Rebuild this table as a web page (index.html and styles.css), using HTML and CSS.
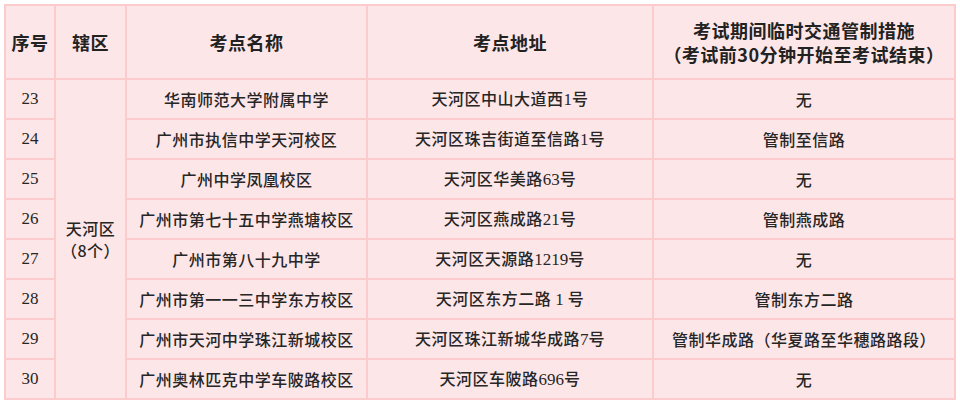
FILE: index.html
```html
<!DOCTYPE html>
<html lang="zh-CN">
<head>
<meta charset="utf-8">
<title>考点交通管制措施</title>
<link rel="stylesheet" href="styles.css">
</head>
<body>
<div class="wrap">
<table class="grid">
  <colgroup>
    <col class="c1"><col class="c2"><col class="c3"><col class="c4"><col class="c5">
  </colgroup>
  <thead>
    <tr class="head">
      <th>序号</th>
      <th>辖区</th>
      <th>考点名称</th>
      <th>考点地址</th>
      <th>考试期间临时交通管制措施<br>（考试前30分钟开始至考试结束）</th>
    </tr>
  </thead>
  <tbody>
    <tr>
      <td class="num">23</td>
      <td rowspan="8" class="dist">天河区<br>（8个）</td>
      <td>华南师范大学附属中学</td>
      <td>天河区中山大道西<span class="d">1</span>号</td>
      <td>无</td>
    </tr>
    <tr>
      <td class="num">24</td>
      <td>广州市执信中学天河校区</td>
      <td>天河区珠吉街道至信路<span class="d">1</span>号</td>
      <td>管制至信路</td>
    </tr>
    <tr>
      <td class="num">25</td>
      <td>广州中学凤凰校区</td>
      <td>天河区华美路<span class="d">63</span>号</td>
      <td>无</td>
    </tr>
    <tr>
      <td class="num">26</td>
      <td>广州市第七十五中学燕塘校区</td>
      <td>天河区燕成路<span class="d">21</span>号</td>
      <td>管制燕成路</td>
    </tr>
    <tr>
      <td class="num">27</td>
      <td>广州市第八十九中学</td>
      <td>天河区天源路<span class="d">1219</span>号</td>
      <td>无</td>
    </tr>
    <tr>
      <td class="num">28</td>
      <td>广州市第一一三中学东方校区</td>
      <td>天河区东方二路 <span class="d">1</span> 号</td>
      <td>管制东方二路</td>
    </tr>
    <tr>
      <td class="num">29</td>
      <td>广州市天河中学珠江新城校区</td>
      <td>天河区珠江新城华成路<span class="d">7</span>号</td>
      <td>管制华成路（华夏路至华穗路路段）</td>
    </tr>
    <tr>
      <td class="num">30</td>
      <td>广州奥林匹克中学车陂路校区</td>
      <td>天河区车陂路<span class="d">696</span>号</td>
      <td>无</td>
    </tr>
  </tbody>
</table>
</div>
</body>
</html>
```

FILE: styles.css
```css
html, body {
  margin: 0;
  padding: 0;
  background: #ffffff;
}

.wrap {
  padding: 4px 0 0 4px;
}

.grid {
  border-collapse: collapse;
  table-layout: fixed;
  width: 950px;
  background: #fde6e8;
  font-family: "Noto Sans CJK SC", "Noto Sans", sans-serif;
  color: #262626;
}

.c1 { width: 50px; }
.c2 { width: 71px; }
.c3 { width: 241px; }
.c4 { width: 286px; }
.c5 { width: 302px; }

.grid th,
.grid td {
  border: 2px solid #fbcbcd;
  text-align: center;
  vertical-align: middle;
  padding: 0;
}

.head {
  height: 74px;
}

.grid th {
  font-size: 18px;
  font-weight: 700;
  line-height: 24px;
  letter-spacing: 0.5px;
  color: #222222;
}

.grid tbody tr {
  height: 40px;
}

.grid td {
  font-size: 16px;
  line-height: 20px;
  font-weight: 500;
  letter-spacing: 0.5px;
}

.grid td.num {
  font-family: "Liberation Serif", "DejaVu Serif", serif;
  font-size: 17px;
  font-weight: 400;
  letter-spacing: 0;
}

.grid td.dist {
  line-height: 22px;
}

.d {
  font-family: "Liberation Serif", "DejaVu Serif", serif;
  font-size: 17px;
  font-weight: 400;
  letter-spacing: 0;
}
```
